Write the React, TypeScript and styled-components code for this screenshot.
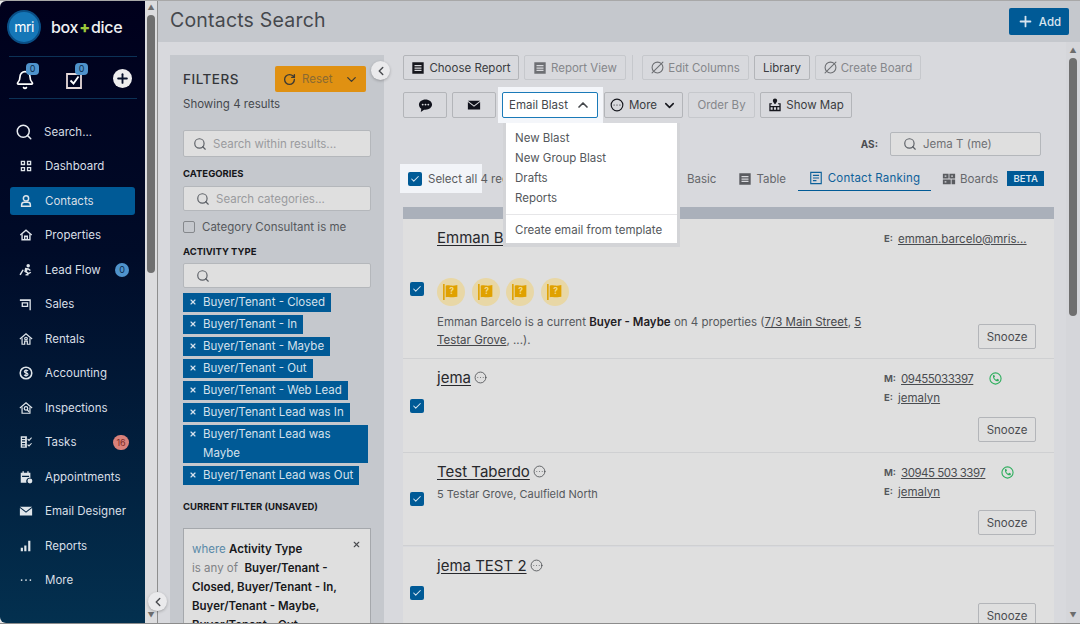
import React from 'react';
import styled, { createGlobalStyle } from 'styled-components';
import {
  Bell,
  ChevronDown,
  ChevronLeft,
  ChevronUp,
  CircleEllipsis,
  CircleSlash2,
  Check,
  Plus,
  RotateCw,
  Search,
  X,
} from 'lucide-react';

const GlobalStyle = createGlobalStyle`
  html, body { margin: 0; padding: 0; height: 100%; overflow: hidden; }
  * { box-sizing: border-box; }
  body { font-family: Inter, "Open Sans", "Liberation Sans", sans-serif; font-size: 11.5px; color: #4a4c50; background: #e8e8ea; }
`;

const iconProps = { width: 14, height: 14, viewBox: '0 0 16 16', fill: 'currentColor' };

const DashboardIcon = () => (
  <svg {...iconProps}>
    <path d="M2 2h5v5H2zM3.500 3.500v2h2v-2zM9 2h5v5H9zM10.500 3.500v2h2v-2zM2 9h5v5H2zM3.500 10.500v2h2v-2zM9 9h5v5H9zM10.500 10.500v2h2v-2z" fillRule="evenodd" />
  </svg>
);
const ContactIcon = () => (
  <svg {...iconProps} fill="none" stroke="currentColor" strokeWidth="1.7">
    <circle cx="8" cy="5" r="3" />
    <path d="M3 14v-1.500C3 10.500 4.500 9.500 6 9.500h4c1.500 0 3 1 3 3V14z" />
  </svg>
);
const HomeIcon = () => (
  <svg {...iconProps} fill="none" stroke="currentColor" strokeWidth="1.6">
    <path d="M1.500 8 8 2.500 14.500 8" />
    <path d="M3.500 7v6.500h9V7M6.500 13.500V9.500h3v4" />
  </svg>
);
const LeadFlowIcon = () => (
  <svg {...iconProps}>
    <circle cx="10.500" cy="3" r="2" />
    <path d="M7 5.500 11 6l2.500 2-1 1L10 7.500 9 9.500l2.500 2-1 3-1.500-.5.500-2L6 10l1-4.500zM5.500 8 2 14l-1.500-1 3.500-5.500zM14 11l-6 3.500-1-1 6-3.500z" />
  </svg>
);
const SalesIcon = () => (
  <svg {...iconProps}>
    <path d="M1 2.500h12.500V15H12V4.500H1zM3 6h7.500v5.500H3zM4.500 7.500v2.500H9V7.500z" fillRule="evenodd" />
  </svg>
);
const RentalsIcon = () => (
  <svg {...iconProps} fill="none" stroke="currentColor" strokeWidth="1.4">
    <path d="M1 8 8 2l7 6" />
    <path d="M3.500 7v7h3v-3.500h3V14h3V7" />
    <circle cx="8" cy="7.500" r="1.500" />
  </svg>
);
const AccountingIcon = () => (
  <svg {...iconProps} fill="none" stroke="currentColor" strokeWidth="1.8">
    <circle cx="8" cy="8" r="6.600" />
    <path d="M10.300 5.600C9.800 4.800 6 4.400 6 6.300c0 2 4.300 1.200 4.300 3.300 0 1.900-3.700 1.500-4.500.6M8 3.800v8.400" strokeWidth="1.300" />
  </svg>
);
const InspectIcon = () => (
  <svg {...iconProps} fill="none" stroke="currentColor" strokeWidth="1.4">
    <path d="M1 8 8 2l7 6" />
    <path d="M3.500 7v7h9V7" />
    <circle cx="8" cy="8.500" r="2" />
    <path d="m9.500 10 2 2.500" />
  </svg>
);
const TasksIcon = () => (
  <svg {...iconProps}>
    <path d="M2 1.500h7v13H2zM3.500 3v1.500H7V3zM3.500 6v1.500H7V6zM3.500 9v1.500H7V9zM3.500 12v1.200H7V12z" fillRule="evenodd" />
    <path d="m10 4 1.500 1 2.500-2.500.8.800L11.500 7 9.500 5.200zM10 10.500l1.500 1 2.500-2.500.8.800-3.300 3.700-2-1.800z" />
  </svg>
);
const ApptIcon = () => (
  <svg {...iconProps}>
    <path d="M2 3h2V1.500h1.500V3h4V1.500H11V3h2v6a4 4 0 0 0-4.500 5.500H2zM3.500 6.500V8h8V6.500z" fillRule="evenodd" />
    <circle cx="12.500" cy="12.500" r="2.800" />
  </svg>
);
const MailIcon = () => (
  <svg {...iconProps}>
    <path d="M1 3h14L8 8.500zM1 4.500V13h14V4.500L8 10z" />
  </svg>
);
const BarsIcon = () => (
  <svg {...iconProps}>
    <path d="M2 10h2.500v4H2zM6 7.500h2.500V14H6zM10.500 2H13v12h-2.500z" />
  </svg>
);
const DotsIcon = () => (
  <svg {...iconProps}>
    <circle cx="3" cy="8" r="1" />
    <circle cx="8" cy="8" r="1" />
    <circle cx="13" cy="8" r="1" />
  </svg>
);
const ReportIcon = () => (
  <svg {...iconProps}>
    <path d="M1.500 1.500h13v13h-13zM4 4.500V6h8V4.500zM4 7.300v1.500h8V7.300zM4 10v1.500h8V10z" fillRule="evenodd" />
  </svg>
);
const ChatIcon = () => (
  <svg {...iconProps} width={15} height={15}>
    <path d="M8 1.500c3.900 0 7 2.500 7 5.500s-3.100 5.500-7 5.500H6.500L3 15l.5-3.500C2 10.500 1 8.800 1 7c0-3 3.100-5.500 7-5.500z" />
    <circle cx="5" cy="7" r="1" fill="#d8d9dd" />
    <circle cx="8" cy="7" r="1" fill="#d8d9dd" />
    <circle cx="11" cy="7" r="1" fill="#d8d9dd" />
  </svg>
);
const MapIcon = () => (
  <svg {...iconProps}>
    <path d="M8 .5a2.500 2.500 0 0 1 2.500 2.500C10.500 4.500 8 7 8 7S5.500 4.500 5.500 3A2.500 2.500 0 0 1 8 .5z" />
    <path d="M1.500 6h3v1.200H3v2h10v-2h-1.500V6h3v9h-13zM3 10.500v3h2.300v-3zM6.800 10.500v3h2.400v-3zM10.700 10.500v3H13v-3z" fillRule="evenodd" />
  </svg>
);
const RankingIcon = () => (
  <svg {...iconProps} fill="none" stroke="currentColor" strokeWidth="1.300">
    <path d="M2 1.500h12v13H2zM4.500 5h7M4.500 8h7M4.500 11h4" />
  </svg>
);
const BoardsIcon = () => (
  <svg {...iconProps}>
    <path d="M1 2h6.500v5.500H1zM8.500 2H15v5.500H8.500zM1 8.500h9v5.500H1zM11 8.500h4v5.500h-4z" />
    <path d="M3 4h2v1.500H3zM3 10.500h2V12H3zM10.500 4h2v1.500h-2z" fill="#d8d9dd" />
  </svg>
);
const FlagIcon = () => (
  <svg width="18" height="18" viewBox="0 0 17 17">
    <path d="M1 1h1.500v15H1zM3.500 2.500c3-1 5 .8 11-.5v11c-5 1.200-8-.5-11 .5z" fill="#e0a100" />
    <text x="9" y="10.500" textAnchor="middle" fontSize="8" fontWeight="700" fill="#f4d98a">?</text>
  </svg>
);
const PhoneIcon = () => (
  <svg width="13" height="13" viewBox="0 0 14 14" fill="none">
    <circle cx="7" cy="7" r="6" stroke="#2fae5e" strokeWidth="1.200" />
    <path d="M4 3.500 5.500 3l1 2-1 .8c.4 1 1.300 2 2.400 2.500l.9-1 2 1-.5 1.600c-3.500.8-7-3.300-5.800-6.400z" fill="#2fae5e" />
  </svg>
);

const navItems = [
  { label: 'Dashboard', icon: <DashboardIcon /> },
  { label: 'Contacts', icon: <ContactIcon />, active: true },
  { label: 'Properties', icon: <HomeIcon /> },
  { label: 'Lead Flow', icon: <LeadFlowIcon />, count: '0' },
  { label: 'Sales', icon: <SalesIcon /> },
  { label: 'Rentals', icon: <RentalsIcon /> },
  { label: 'Accounting', icon: <AccountingIcon /> },
  { label: 'Inspections', icon: <InspectIcon /> },
  { label: 'Tasks', icon: <TasksIcon />, count: '16', alert: true },
  { label: 'Appointments', icon: <ApptIcon /> },
  { label: 'Email Designer', icon: <MailIcon /> },
  { label: 'Reports', icon: <BarsIcon /> },
  { label: 'More', icon: <DotsIcon /> },
];

const chips = [
  'Buyer/Tenant - Closed',
  'Buyer/Tenant - In',
  'Buyer/Tenant - Maybe',
  'Buyer/Tenant - Out',
  'Buyer/Tenant - Web Lead',
  'Buyer/Tenant Lead was In',
  'Buyer/Tenant Lead was Maybe',
  'Buyer/Tenant Lead was Out',
];

const App = () => {
  return (
    <>
      <GlobalStyle />
      <Shell>
        <Sidebar>
          <Brand>
            <LogoCircle>mri</LogoCircle>
            <Wordmark>
              box<b>+</b>dice
            </Wordmark>
          </Brand>
          <QuickRow>
            <QuickItem>
              <Bell size={20} strokeWidth={2} />
              <QuickBadge>0</QuickBadge>
            </QuickItem>
            <QuickItem>
              <svg width="20" height="20" viewBox="0 0 20 20" fill="none" stroke="#fff" strokeWidth="1.800">
                <path d="M3 4h14v14H3z" stroke="#e6d9d9" />
                <path d="m6.500 10.500 3 3 5-7" />
              </svg>
              <QuickBadge>0</QuickBadge>
            </QuickItem>
            <PlusCircle>
              <Plus size={15} strokeWidth={3} />
            </PlusCircle>
          </QuickRow>
          <NavSearch>
            <Search size={18} strokeWidth={2} />
            <span>Search...</span>
          </NavSearch>
          <NavList>
            {navItems.map((item) => (
              <NavItem key={item.label} $active={item.active}>
                <NavIcon>{item.icon}</NavIcon>
                <NavLabel>{item.label}</NavLabel>
                {item.count && <NavCount $alert={item.alert}>{item.count}</NavCount>}
              </NavItem>
            ))}
          </NavList>
        </Sidebar>

        <Rail>
          <RailArrow>▲</RailArrow>
          <RailThumb />
          <RailArrow>▼</RailArrow>
          <RoundToggle $left={3} $top={591}>
            <ChevronLeft size={14} strokeWidth={2.5} />
          </RoundToggle>
        </Rail>

        <Main>
          <Header>
            <Title>Contacts Search</Title>
            <AddButton>
              <Plus size={17} strokeWidth={2.5} />
              Add
            </AddButton>
          </Header>

          <Body>
            <Content>
              <FilterPanel>
                <RoundToggle $left={201} $top={6}>
                  <ChevronLeft size={14} strokeWidth={2.5} />
                </RoundToggle>
                <FilterHead>
                  <FilterTitle>FILTERS</FilterTitle>
                  <ResetButton>
                    <ResetMain>
                      <RotateCw size={13} strokeWidth={2.5} color="#3d3a33" />
                      Reset
                    </ResetMain>
                    <ChevronDown size={15} strokeWidth={2} color="#3d3a33" />
                  </ResetButton>
                </FilterHead>
                <ShowingText>Showing 4 results</ShowingText>
                <FilterInput $top={18} $height={27}>
                  <Search size={14} color="#5c6066" />
                  <span>Search within results...</span>
                </FilterInput>
                <SectionLabel $top={11}>CATEGORIES</SectionLabel>
                <FilterInput $top={6} $height={25} $indent={12}>
                  <Search size={14} color="#5c6066" />
                  <span>Search categories...</span>
                </FilterInput>
                <CheckLine>
                  <EmptyBox />
                  Category Consultant is me
                </CheckLine>
                <SectionLabel $top={13}>ACTIVITY TYPE</SectionLabel>
                <FilterInput $top={5} $height={25} $indent={12}>
                  <Search size={14} color="#5c6066" />
                </FilterInput>
                <ChipList>
                  {chips.map((chip) => (
                    <Chip key={chip}>
                      <X size={8} strokeWidth={3.5} />
                      <ChipText>{chip}</ChipText>
                    </Chip>
                  ))}
                </ChipList>
                <SectionLabel $top={16}>CURRENT FILTER (UNSAVED)</SectionLabel>
                <CurrentBox>
                  <CloseMark>
                    <X size={9} strokeWidth={3} />
                  </CloseMark>
                  <p>
                    <WhereWord>where</WhereWord> <strong>Activity Type</strong>
                  </p>
                  <p>
                    <IsWord>is any of</IsWord>
                    &nbsp;&nbsp;
                    <strong>Buyer/Tenant - Closed, Buyer/Tenant - In, Buyer/Tenant - Maybe, Buyer/Tenant - Out</strong>
                  </p>
                </CurrentBox>
              </FilterPanel>

              <Results>
                <ToolRow>
                  <ToolButton $w={116} $strong>
                    <ReportIcon />
                    Choose Report
                  </ToolButton>
                  <ToolButton $w={102} $muted>
                    <ReportIcon />
                    Report View
                  </ToolButton>
                  <ToolDivider />
                  <ToolButton $w={107} $muted>
                    <CircleSlash2 size={13} />
                    Edit Columns
                  </ToolButton>
                  <ToolButton $w={56} $strong>
                    Library
                  </ToolButton>
                  <ToolButton $w={106} $muted>
                    <CircleSlash2 size={13} />
                    Create Board
                  </ToolButton>
                </ToolRow>

                <ActionRow>
                  <ToolButton $w={44} $strong $dark>
                    <ChatIcon />
                  </ToolButton>
                  <ToolButton $w={44} $strong $dark>
                    <MailIcon />
                  </ToolButton>
                  <BlastSpot>
                    <BlastButton>
                      Email Blast
                      <ChevronUp size={16} strokeWidth={2.5} />
                    </BlastButton>
                    <BlastMenu>
                      <BlastItem>New Blast</BlastItem>
                      <BlastItem>New Group Blast</BlastItem>
                      <BlastItem>Drafts</BlastItem>
                      <BlastItem>Reports</BlastItem>
                      <BlastDivider />
                      <BlastItem>Create email from template</BlastItem>
                    </BlastMenu>
                  </BlastSpot>
                  <MoreButton $w={79} $strong>
                    <CircleEllipsis size={14} />
                    More
                    <ChevronDown size={15} strokeWidth={2.5} />
                  </MoreButton>
                  <ToolButton $w={67} $muted>
                    Order By
                  </ToolButton>
                  <ToolButton $w={92} $strong>
                    <MapIcon />
                    Show Map
                  </ToolButton>
                </ActionRow>

                <AsRow>
                  <AsLabel>AS:</AsLabel>
                  <AsInput>
                    <Search size={14} color="#5c6066" />
                    Jema T (me)
                  </AsInput>
                </AsRow>

                <TabRow>
                  <SelectAll>
                    <TickBox>
                      <Check size={10} strokeWidth={2.5} />
                    </TickBox>
                    Select all 4 records
                  </SelectAll>
                  <Tabs>
                    <Tab $gap={22}>Basic</Tab>
                    <Tab $gap={12}>
                      <ReportIcon />
                      Table
                    </Tab>
                    <ActiveTab>
                      <RankingIcon />
                      Contact Ranking
                    </ActiveTab>
                    <Tab $gap={11}>
                      <BoardsIcon />
                      Boards
                      <BetaTag>BETA</BetaTag>
                    </Tab>
                  </Tabs>
                </TabRow>

                <Band />

                <ContactRow $h={140}>
                  <TickBox>
                    <Check size={10} strokeWidth={2.5} />
                  </TickBox>
                  <RowMain>
                    <NameLine>
                      <NameLink>Emman Barcelo</NameLink>
                    </NameLine>
                    <Flags>
                      {[0, 1, 2, 3].map((n) => (
                        <FlagBadge key={n}>
                          <FlagIcon />
                        </FlagBadge>
                      ))}
                    </Flags>
                    <Summary>
                      Emman Barcelo is a current <strong>Buyer - Maybe</strong> on 4 properties (<a>7/3 Main Street</a>, <a>5 Testar Grove</a>, ...).
                    </Summary>
                  </RowMain>
                  <RowSide $end={9}>
                    <ContactLine>
                      <b>E:</b>
                      <a>emman.barcelo@mris...</a>
                    </ContactLine>
                    <SnoozeButton>Snooze</SnoozeButton>
                  </RowSide>
                </ContactRow>

                <ContactRow $h={94}>
                  <TickBox>
                    <Check size={10} strokeWidth={2.5} />
                  </TickBox>
                  <RowMain>
                    <NameLine>
                      <NameLink>jema</NameLink>
                      <CircleEllipsis size={13} strokeWidth={1.5} />
                    </NameLine>
                  </RowMain>
                  <RowSide $end={10}>
                    <div>
                      <ContactLine>
                        <b>M:</b>
                        <PhoneLink>09455033397</PhoneLink>
                        <PhoneSlot>
                          <PhoneIcon />
                        </PhoneSlot>
                      </ContactLine>
                      <ContactLine>
                        <b>E:</b>
                        <a>jemalyn</a>
                      </ContactLine>
                    </div>
                    <SnoozeButton>Snooze</SnoozeButton>
                  </RowSide>
                </ContactRow>

                <ContactRow $h={93}>
                  <TickBox>
                    <Check size={10} strokeWidth={2.5} />
                  </TickBox>
                  <RowMain>
                    <NameLine>
                      <NameLink>Test Taberdo</NameLink>
                      <CircleEllipsis size={13} strokeWidth={1.5} />
                    </NameLine>
                    <AddressLine>5 Testar Grove, Caulfield North</AddressLine>
                  </RowMain>
                  <RowSide $end={10}>
                    <div>
                      <ContactLine>
                        <b>M:</b>
                        <PhoneLink>30945 503 3397</PhoneLink>
                        <PhoneSlot>
                          <PhoneIcon />
                        </PhoneSlot>
                      </ContactLine>
                      <ContactLine>
                        <b>E:</b>
                        <a>jemalyn</a>
                      </ContactLine>
                    </div>
                    <SnoozeButton>Snooze</SnoozeButton>
                  </RowSide>
                </ContactRow>

                <ContactRow $h={92} $gapTop={1}>
                  <TickBox>
                    <Check size={10} strokeWidth={2.5} />
                  </TickBox>
                  <RowMain>
                    <NameLine>
                      <NameLink>jema TEST 2</NameLink>
                      <CircleEllipsis size={13} strokeWidth={1.5} />
                    </NameLine>
                  </RowMain>
                  <RowSide $end={10}>
                    <div />
                    <SnoozeButton>Snooze</SnoozeButton>
                  </RowSide>
                </ContactRow>
              </Results>
            </Content>

            <PageScroll>
              <RailArrow>▲</RailArrow>
              <PageThumb />
              <RailArrow>▼</RailArrow>
            </PageScroll>
          </Body>
        </Main>
      </Shell>
    </>
  );
};

const Shell = styled.div`
  display: flex;
  width: 1080px;
  height: 624px;
  overflow: hidden;
  border-top: 1px solid #a8a8a8;
  border-bottom: 1px solid #8c8c8c;
`;

const Sidebar = styled.nav`
  width: 145px;
  flex: none;
  background: linear-gradient(180deg, #00001c 0%, #000b28 40%, #03304f 100%);
  border-radius: 6px 0 0 6px;
  color: #e3e8ee;
  padding: 8px 8px 0 9px;
`;

const Brand = styled.div`
  display: flex;
  align-items: center;
  gap: 10px;
  height: 35px;
  margin-left: -2px;
`;

const LogoCircle = styled.div`
  width: 34px;
  height: 34px;
  border-radius: 50%;
  background: #1577b8;
  border: 2px solid #0a4f86;
  color: #fff;
  font-size: 14px;
  display: flex;
  align-items: center;
  justify-content: center;
  letter-spacing: -0.5px;
`;

const Wordmark = styled.div`
  font-size: 16px;
  font-weight: 500;
  color: #eef0f3;
  letter-spacing: -0.3px;

  b {
    color: #9cc93a;
    font-weight: 800;
    margin: 0 1px;
  }
`;

const QuickRow = styled.div`
  display: flex;
  align-items: center;
  justify-content: space-between;
  height: 43px;
  margin: 12px 0 0;
  padding: 0 5px 0 6px;
  border-top: 1px solid #0c3256;
  border-bottom: 1px solid #0c3256;
  color: #fff;
`;

const QuickItem = styled.div`
  position: relative;
  display: flex;
  margin-top: 4px;
`;

const QuickBadge = styled.span`
  position: absolute;
  top: -7px;
  left: 11px;
  min-width: 13px;
  height: 12px;
  border-radius: 4px;
  background: #4f93cc;
  color: #0b2c4d;
  font-size: 9px;
  text-align: center;
  line-height: 12px;
`;

const PlusCircle = styled.div`
  width: 19px;
  height: 19px;
  margin-top: 1px;
  border-radius: 50%;
  background: #eeeeee;
  color: #08122b;
  display: flex;
  align-items: center;
  justify-content: center;
`;

const NavSearch = styled.div`
  display: flex;
  align-items: center;
  gap: 11px;
  height: 35px;
  margin-top: 15px;
  padding-left: 6px;
  color: #e8edf2;

  span {
    font-size: 11.5px;
    color: #d4dbe3;
  }
`;

const NavList = styled.div`
  display: flex;
  flex-direction: column;
`;

const NavItem = styled.div<{ $active?: boolean }>`
  display: flex;
  align-items: center;
  height: ${(p) => (p.$active ? '28.5px' : '34.5px')};
  padding: 0 6px 0 8px;
  margin: ${(p) => (p.$active ? '3px 2px 3px 1px' : '0 2px 0 1px')};
  background: ${(p) => (p.$active ? '#005a96' : 'transparent')};
  border-radius: 3px;
`;

const NavIcon = styled.span`
  width: 14px;
  height: 14px;
  display: flex;
  margin-right: 12px;
  margin-left: 1px;
  color: #dfe5ea;
`;

const NavLabel = styled.span`
  flex: 1;
  font-size: 11.5px;
  white-space: nowrap;
  color: #d8dfe6;
`;

const NavCount = styled.span<{ $alert?: boolean }>`
  min-width: ${(p) => (p.$alert ? '16px' : '14px')};
  height: ${(p) => (p.$alert ? '15px' : '14px')};
  padding: 0 2px;
  border-radius: 8px;
  font-size: 9px;
  line-height: ${(p) => (p.$alert ? '15px' : '14px')};
  text-align: center;
  background: ${(p) => (p.$alert ? '#d9817a' : '#4f93cc')};
  color: ${(p) => (p.$alert ? '#7c2b26' : '#0b2c4d')};
`;

const Rail = styled.div`
  position: relative;
  width: 12px;
  flex: none;
  display: flex;
  flex-direction: column;
  align-items: center;
  background: #dcdcde;
`;

const RailArrow = styled.div`
  flex: none;
  height: 14px;
  font-size: 7px;
  line-height: 14px;
  color: #6c6c6c;
  text-align: center;
  margin: 0 auto;
`;

const RailThumb = styled.div`
  width: 8px;
  height: 258px;
  margin-bottom: auto;
  border-radius: 4px;
  background: #6f6f6f;
`;

const RoundToggle = styled.div<{ $left: number; $top: number }>`
  position: absolute;
  left: ${(p) => p.$left}px;
  top: ${(p) => p.$top}px;
  width: 19px;
  height: 19px;
  border-radius: 50%;
  background: #eaeaec;
  color: #4a4c50;
  box-shadow: 0 1px 3px rgba(0, 0, 0, 0.25);
  display: flex;
  align-items: center;
  justify-content: center;
  z-index: 3;
`;

const Main = styled.main`
  flex: 1;
  min-width: 0;
  display: flex;
  flex-direction: column;
  border-left: 1px solid #8e8e8e;
  background: #d8d9dd;
`;

const Header = styled.header`
  height: 41px;
  flex: none;
  display: flex;
  align-items: center;
  justify-content: space-between;
  padding: 0 11px 0 12px;
  background: #c5c8cd;
`;

const Title = styled.h1`
  margin: 0 0 3px;
  font-size: 19.5px;
  font-weight: 400;
  color: #45484d;
  letter-spacing: 0.2px;
`;

const AddButton = styled.button`
  display: flex;
  align-items: center;
  justify-content: center;
  gap: 5px;
  width: 60px;
  height: 27px;
  border: 0;
  border-radius: 2px;
  background: #005a96;
  color: #d8e4ef;
  font: 500 11.5px Inter, sans-serif;
`;

const Body = styled.div`
  flex: 1;
  min-height: 0;
  display: flex;
`;

const Content = styled.div`
  flex: 1;
  min-width: 0;
  display: flex;
  gap: 19px;
  padding: 13px 12px 0;
`;

const FilterPanel = styled.aside`
  position: relative;
  width: 214px;
  flex: none;
  height: 600px;
  padding: 11px 13px;
  background: #c5c8cd;
`;

const FilterHead = styled.div`
  display: flex;
  align-items: center;
  justify-content: space-between;
  margin-right: 5px;
`;

const FilterTitle = styled.div`
  font-size: 13.5px;
  font-weight: 500;
  color: #34363a;
  letter-spacing: 0.5px;
`;

const ResetButton = styled.div`
  display: flex;
  align-items: center;
  justify-content: space-between;
  width: 91px;
  height: 26px;
  padding: 0 7px 0 8px;
  border-radius: 2px;
  background: #e09112;
`;

const ResetMain = styled.span`
  display: flex;
  align-items: center;
  gap: 6px;
  color: #8a6a32;
  font-size: 11.5px;
`;

const ShowingText = styled.div`
  margin-top: 4px;
  font-size: 11.5px;
  line-height: 16px;
  color: #45484d;
`;

const FilterInput = styled.div<{ $top: number; $height: number; $indent?: number }>`
  display: flex;
  align-items: center;
  gap: 6px;
  height: ${(p) => p.$height}px;
  margin-top: ${(p) => p.$top}px;
  padding-left: ${(p) => p.$indent ?? 9}px;
  background: #dfdfdf;
  border: 1px solid #b4b7bb;
  border-radius: 2px;
  font-size: 11.5px;
  color: #9a9b9e;
`;

const SectionLabel = styled.div<{ $top: number }>`
  margin-top: ${(p) => p.$top}px;
  font-size: 9.5px;
  line-height: 12px;
  font-weight: 700;
  color: #15161a;
`;

const CheckLine = styled.div`
  display: flex;
  align-items: center;
  gap: 7px;
  margin-top: 9px;
  height: 13px;
  font-size: 11.5px;
  color: #55585c;
`;

const EmptyBox = styled.span`
  width: 12px;
  height: 12px;
  border: 1px solid #85888c;
  border-radius: 2px;
`;

const ChipList = styled.div`
  display: flex;
  flex-direction: column;
  align-items: flex-start;
  gap: 3px;
  margin-top: 5px;
`;

const Chip = styled.div`
  display: flex;
  align-items: flex-start;
  gap: 6px;
  max-width: 185px;
  padding: 0 6px 0 6px;
  background: #005a96;
  color: #d5e1ec;

  svg {
    flex: none;
    margin-top: 5px;
  }
`;

const ChipText = styled.span`
  font-size: 11.5px;
  line-height: 19px;
`;

const CurrentBox = styled.div`
  position: relative;
  margin-top: 15px;
  padding: 11px 8px 0;
  height: 130px;
  background: #dfdfdf;
  border: 1px solid #a5a8ac;
  font-size: 11.5px;
  line-height: 19px;

  p {
    margin: 0;
  }

  strong {
    color: #17181b;
    font-weight: 600;
  }
`;

const CloseMark = styled.span`
  position: absolute;
  top: 7px;
  right: 9px;
  color: #4a4c50;
`;

const WhereWord = styled.span`
  color: #5b8aa8;
`;

const IsWord = styled.span`
  color: #808285;
`;

const Results = styled.section`
  flex: 1;
  min-width: 0;
`;

const ToolRow = styled.div`
  display: flex;
  align-items: center;
  gap: 5px;
  height: 25px;
`;

const ActionRow = styled(ToolRow)`
  height: 26px;
  margin-top: 12px;
`;

const ToolButton = styled.button<{ $w: number; $strong?: boolean; $muted?: boolean; $dark?: boolean }>`
  display: flex;
  align-items: center;
  justify-content: center;
  gap: 4px;
  flex: none;
  width: ${(p) => p.$w}px;
  height: 100%;
  padding: 0;
  background: #d8d9dd;
  border: 1px solid ${(p) => (p.$muted ? '#c6c8cc' : '#b3b5b9')};
  border-radius: 2px;
  font: 400 11.5px Inter, sans-serif;
  color: ${(p) => (p.$muted ? '#85878b' : p.$dark ? '#12131c' : '#3a3c40')};
  white-space: nowrap;

  svg {
    color: ${(p) => (p.$muted ? '#6d6f73' : p.$dark ? '#10121c' : '#16171d')};
    flex: none;
  }
`;

const MoreButton = styled(ToolButton)`
  gap: 5px;
`;

const ToolDivider = styled.span`
  width: 1px;
  height: 25px;
  margin: 0 4px 0 1px;
  background: #c6c8cc;
`;

const BlastSpot = styled.div`
  position: relative;
  flex: none;
  height: 36px;
  width: 105px;
  margin: 0 -4px 0 -3px;
  padding: 5px 5px 5px 4px;
  background: #f4f6fa;
  z-index: 2;
`;

const BlastButton = styled.button`
  display: flex;
  align-items: center;
  justify-content: center;
  gap: 7px;
  width: 96px;
  height: 26px;
  padding: 0;
  background: #fff;
  border: 1px solid #1a7ab8;
  border-radius: 2px;
  font: 400 11.5px Inter, sans-serif;
  color: #44474b;
`;

const BlastMenu = styled.div`
  position: absolute;
  left: 5px;
  top: 36px;
  width: 177px;
  padding: 5px 0 3px;
  background: #fff;
  border: 0 solid #d3d4d7;
  border-width: 0 3px 4px 3px;
`;

const BlastItem = styled.div`
  height: 20px;
  padding-left: 9px;
  font-size: 11.5px;
  line-height: 20px;
  color: #55585c;
  white-space: nowrap;
`;

const BlastDivider = styled.div`
  height: 1px;
  margin: 6px 0 5px;
  background: #e6e6e8;
`;

const AsRow = styled.div`
  display: flex;
  align-items: center;
  justify-content: flex-end;
  gap: 12px;
  height: 24px;
  margin-top: 14px;
  padding-right: 13px;
`;

const AsLabel = styled.span`
  font-size: 10px;
  font-weight: 700;
  color: #4a4c50;
`;

const AsInput = styled.div`
  display: flex;
  align-items: center;
  gap: 6px;
  width: 151px;
  height: 24px;
  padding-left: 12px;
  background: #dfdfdf;
  border: 1px solid #b4b7bb;
  border-radius: 2px;
  font-size: 11.5px;
  color: #6f7175;
`;

const TabRow = styled.div`
  display: flex;
  align-items: center;
  height: 29px;
  margin-top: 8px;
  margin-left: -3px;
`;

const SelectAll = styled.div`
  display: flex;
  align-items: center;
  gap: 6px;
  width: 82px;
  height: 29px;
  padding-left: 8px;
  background: #f2f4f8;
  font-size: 11.5px;
  color: #5a5c60;
  white-space: nowrap;
`;

const TickBox = styled.span`
  width: 14px;
  height: 14px;
  flex: none;
  display: flex;
  align-items: center;
  justify-content: center;
  border-radius: 2px;
  background: #005a96;
  color: #d7e5f0;
`;

const Tabs = styled.div`
  display: flex;
  align-items: center;
  margin-left: 205px;
  height: 100%;
`;

const Tab = styled.div<{ $gap: number }>`
  display: flex;
  align-items: center;
  gap: 4px;
  margin-right: ${(p) => p.$gap}px;
  font-size: 11.5px;
  color: #66686c;
  white-space: nowrap;

  svg {
    color: #5a5c60;
  }
`;

const ActiveTab = styled.div`
  display: flex;
  align-items: center;
  justify-content: center;
  gap: 5px;
  width: 133px;
  height: 26px;
  margin-right: 11px;
  margin-bottom: 1px;
  border-bottom: 1.5px solid #005a96;
  color: #0e619a;
  font-size: 11.5px;
  letter-spacing: 0.2px;
  white-space: nowrap;
`;

const BetaTag = styled.span`
  width: 37px;
  height: 15px;
  margin-left: 5px;
  background: #005a96;
  color: #d8e4ef;
  font-size: 9.5px;
  font-weight: 600;
  line-height: 15px;
  text-align: center;
`;

const Band = styled.div`
  height: 12px;
  margin-top: 14px;
  background: #aab0ba;
`;

const ContactRow = styled.article<{ $h: number; $gapTop?: number }>`
  display: grid;
  grid-template-columns: 14px 1fr 152px;
  column-gap: 13px;
  align-items: center;
  height: ${(p) => p.$h}px;
  margin-top: ${(p) => p.$gapTop ?? 0}px;
  padding-left: 7px;
  padding-right: 18px;
  background: #dfdfdf;
  border-bottom: 1px solid #cfd0d2;
`;

const RowMain = styled.div`
  align-self: stretch;
  min-width: 0;
  padding-top: 8px;
`;

const NameLine = styled.div`
  display: flex;
  align-items: center;
  gap: 3px;
  height: 20px;
  color: #4a4c50;
`;

const NameLink = styled.a`
  font-size: 15px;
  color: #27282c;
  text-decoration: underline;
  text-underline-offset: 2px;
`;

const AddressLine = styled.div`
  margin-top: 6px;
  font-size: 11px;
  color: #55585c;
`;

const Flags = styled.div`
  display: flex;
  gap: 6.5px;
  margin-top: 31px;
`;

const FlagBadge = styled.span`
  width: 28px;
  height: 28px;
  border-radius: 50%;
  background: #e8d7a6;
  display: flex;
  align-items: center;
  justify-content: center;
`;

const Summary = styled.p`
  margin: 7px 0 0;
  width: 440px;
  font-size: 11.5px;
  line-height: 18px;
  color: #55585c;

  strong {
    color: #1f2024;
    font-weight: 600;
  }

  a {
    text-decoration: underline;
    color: #46474b;
  }
`;

const RowSide = styled.div<{ $end: number }>`
  align-self: stretch;
  display: flex;
  flex-direction: column;
  justify-content: space-between;
  padding: 10px 0 ${(p) => p.$end}px;
`;

const ContactLine = styled.div`
  display: flex;
  align-items: center;
  gap: 5px;
  height: 19px;
  font-size: 11.5px;
  color: #4a4c50;
  white-space: nowrap;

  b {
    font-size: 9.5px;
    font-weight: 700;
    color: #55585c;
  }

  a {
    text-decoration: underline;
  }
`;

const PhoneLink = styled.a`
  letter-spacing: -0.5px;
`;

const PhoneSlot = styled.span`
  display: flex;
  margin-left: 11px;
`;

const SnoozeButton = styled.button`
  align-self: flex-end;
  width: 58px;
  height: 25px;
  padding: 0;
  background: #dfdfdf;
  border: 1px solid #b3b5b9;
  border-radius: 2px;
  font: 400 11.5px Inter, sans-serif;
  color: #4a4c50;
`;

const PageScroll = styled.div`
  width: 14px;
  flex: none;
  display: flex;
  flex-direction: column;
  align-items: center;
  padding-top: 2px;
  background: #d5d6da;
`;

const PageThumb = styled.div`
  width: 8px;
  height: 258px;
  margin-bottom: auto;
  border-radius: 4px;
  background: #6f6f6f;
`;

export default App;
